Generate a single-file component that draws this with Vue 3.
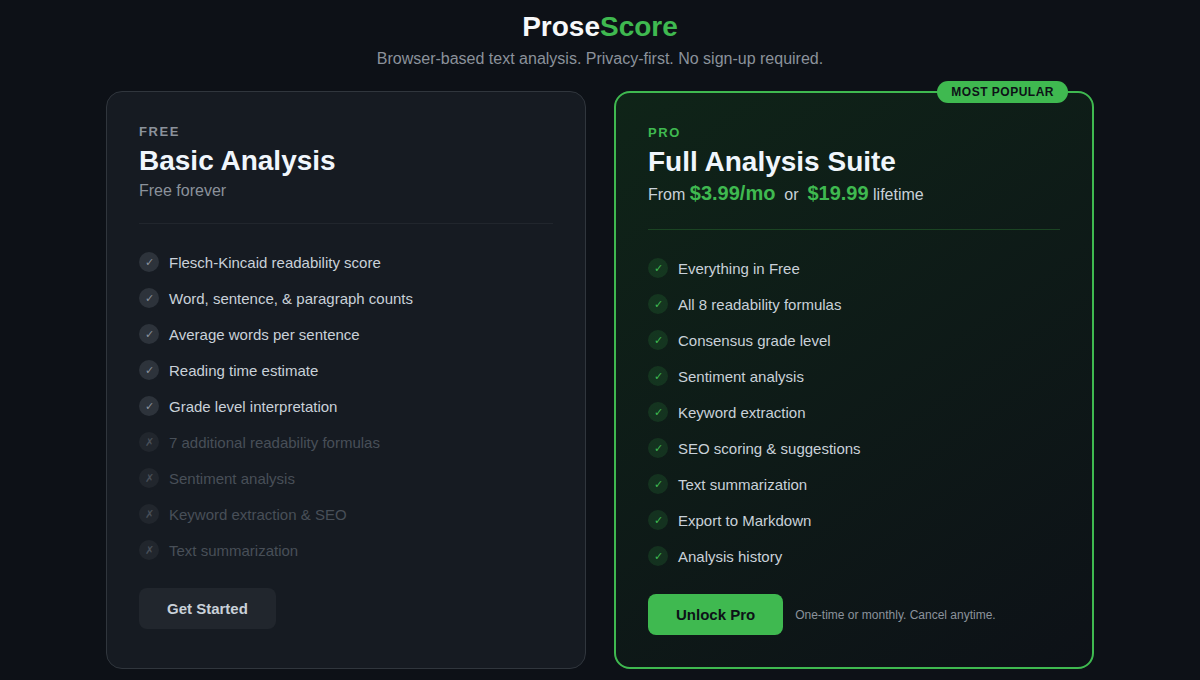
<template>
  <div class="page">
    <header class="head">
      <h1 class="logo">Prose<span>Score</span></h1>
      <p class="tagline">Browser-based text analysis. Privacy-first. No sign-up required.</p>
    </header>

    <div class="plans">
      <section class="card">
        <div class="tier">FREE</div>
        <h2 class="name">Basic Analysis</h2>
        <div class="price">Free forever</div>
        <hr class="rule" />
        <ul class="features">
          <li v-for="f in freeFeatures" :key="f.text" :class="{ off: f.off }">
            <span class="mark">{{ f.off ? '✗' : '✓' }}</span>
            {{ f.text }}
          </li>
        </ul>
        <div class="actions">
          <button class="btn">Get Started</button>
        </div>
      </section>

      <section class="card pro">
        <span class="badge">MOST POPULAR</span>
        <div class="tier">PRO</div>
        <h2 class="name">Full Analysis Suite</h2>
        <div class="price">From <strong>$3.99/mo</strong>&nbsp; or &nbsp;<strong>$19.99</strong> lifetime</div>
        <hr class="rule" />
        <ul class="features">
          <li v-for="f in proFeatures" :key="f">
            <span class="mark">✓</span>
            {{ f }}
          </li>
        </ul>
        <div class="actions">
          <button class="btn">Unlock Pro</button>
          <span class="note">One-time or monthly. Cancel anytime.</span>
        </div>
      </section>
    </div>
  </div>
</template>

<script setup>
const freeFeatures = [
  { text: 'Flesch-Kincaid readability score' },
  { text: 'Word, sentence, & paragraph counts' },
  { text: 'Average words per sentence' },
  { text: 'Reading time estimate' },
  { text: 'Grade level interpretation' },
  { text: '7 additional readability formulas', off: true },
  { text: 'Sentiment analysis', off: true },
  { text: 'Keyword extraction & SEO', off: true },
  { text: 'Text summarization', off: true },
]

const proFeatures = [
  'Everything in Free',
  'All 8 readability formulas',
  'Consensus grade level',
  'Sentiment analysis',
  'Keyword extraction',
  'SEO scoring & suggestions',
  'Text summarization',
  'Export to Markdown',
  'Analysis history',
]
</script>

<style>
html, body {
  margin: 0;
  background: #0d1117;
}
</style>

<style scoped>
.page {
  height: 680px;
  overflow: hidden;
  box-sizing: border-box;
  padding-top: 9px;
  background: #0d1117;
  font-family: "Liberation Sans", Arial, sans-serif;
}

.head {
  text-align: center;
  margin-bottom: 23px;
}

.logo {
  margin: 0 0 4px;
  font-size: 28px;
  line-height: 36px;
  font-weight: 700;
  color: #f7f8fa;
}

.logo span {
  color: #3fb950;
}

.tagline {
  margin: 0;
  font-size: 16px;
  line-height: 19px;
  color: #8b929b;
}

.plans {
  display: grid;
  grid-template-columns: 480px 480px;
  justify-content: center;
  gap: 28px;
}

.card {
  position: relative;
  box-sizing: border-box;
  padding: 32px;
  background: #161b22;
  border: 1px solid #30363d;
  border-radius: 16px;
}

.card.pro {
  border: 2px solid #3fb950;
  background: linear-gradient(145deg, #0f2418, #0d1117);
}

.badge {
  position: absolute;
  top: -12px;
  right: 24px;
  padding: 0 14px;
  line-height: 22px;
  border-radius: 11px;
  background: #3fb950;
  color: #0d1117;
  font-size: 12px;
  font-weight: 700;
  letter-spacing: 0.5px;
}

.tier {
  font-size: 13px;
  line-height: 15px;
  font-weight: 700;
  letter-spacing: 1.56px;
  color: #8b929b;
}

.pro .tier {
  color: #3fb950;
}

.name {
  margin: 5px 0 0;
  font-size: 28px;
  line-height: 34px;
  font-weight: 700;
  color: #f0f6fc;
}

.price {
  margin-top: 2px;
  font-size: 16px;
  line-height: 21px;
  color: #8b929b;
}

.pro .price {
  line-height: 24px;
  color: #c9d1d9;
}

.price strong {
  font-size: 20px;
  color: #3fb950;
}

.rule {
  margin: 22px 0 20px;
  height: 1px;
  border: 0;
  background: #21262d;
}

.pro .rule {
  background: #1b4423;
}

.features {
  margin: 0 0 20px;
  padding: 0;
  list-style: none;
}

.features li {
  display: flex;
  align-items: center;
  gap: 10px;
  height: 36px;
  font-size: 15px;
  color: #c9d1d9;
}

.features li.off {
  color: #484f58;
}

.mark {
  flex: none;
  width: 20px;
  height: 20px;
  border-radius: 50%;
  display: flex;
  align-items: center;
  justify-content: center;
  font-size: 11px;
  background: #2d333b;
  color: #8b929b;
}

.off .mark {
  background: #21262d;
  color: #484f58;
}

.pro .mark {
  background: rgba(63, 185, 80, 0.15);
  color: #3fb950;
}

.actions {
  display: flex;
  align-items: center;
  gap: 12px;
}

.btn {
  padding: 0 28px;
  height: 41px;
  border: 0;
  border-radius: 8px;
  background: #21262d;
  color: #c9d1d9;
  font-family: inherit;
  font-size: 15px;
  font-weight: 700;
}

.pro .btn {
  background: #3fb950;
  color: #0d1117;
}

.note {
  font-size: 12px;
  color: #8b929b;
}
</style>
